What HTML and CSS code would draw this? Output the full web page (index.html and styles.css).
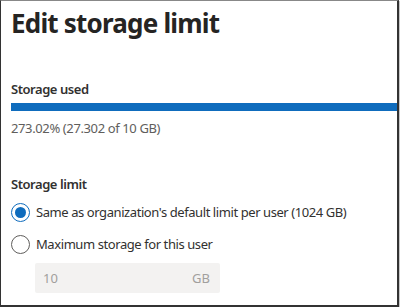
FILE: index.html
```html
<!DOCTYPE html>
<html lang="en">
<head>
	<meta charset="UTF-8">
	<title>Edit storage limit</title>
	<link rel="stylesheet" href="styles.css">
</head>
<body>
	<div class="panel">
		<h1 class="title">Edit storage limit</h1>
		<div class="section">
			<div class="label">Storage used</div>
			<div class="bar"><div class="bar_fill" style="width: 100%"></div></div>
			<div class="usage">273.02% (27.302 of 10 GB)</div>
		</div>
		<div class="section">
			<div class="label">Storage limit</div>
			<ul class="options">
				<li class="option"><span class="radio checked"></span> Same as organization's default limit per user (1024 GB)</li>
				<li class="option"><span class="radio"></span> Maximum storage for this user</li>
			</ul>
			<div class="field">
				<span class="field_value">10</span>
				<span class="field_unit">GB</span>
			</div>
		</div>
	</div>
</body>
</html>
```

FILE: styles.css
```css
html{
	font-family: "Noto Sans", "Open Sans", sans-serif;
	color: #323130;
}
body{
	margin: 0;
	padding: 0;
}
.panel {
	box-sizing: border-box;
	width: 399px;
	height: 307px;
	border: 1px solid #333;
	border-top-color: #888;
	border-right-width: 2px;
	border-bottom-width: 2px;
	box-shadow: 1px 1px 0 #c8c8c8;
	padding: 0 0 0 10px;
	overflow: hidden;
}
.title {
	margin: 0;
	padding-top: 4px;
	font-size: 26px;
	letter-spacing: -0.8px;
	line-height: 36px;
	font-weight: 700;
	color: #252423;
}
.section {
	margin-top: 39px;
}
.section + .section {
	margin-top: 38px;
}
.label {
	font-size: 13px;
	letter-spacing: -0.45px;
	font-weight: 600;
	line-height: 18px;
}
.bar {
	margin-top: 5px;
	height: 8px;
}
.bar_fill {
	height: 100%;
	background: #0f6cbd;
}
.usage {
	margin-top: 8px;
	font-size: 13px;
	letter-spacing: -0.38px;
	line-height: 18px;
	color: #605e5c;
}
.options {
	list-style: none;
	margin: 3px 0 0;
	padding: 0;
}
.option {
	display: flex;
	align-items: center;
	gap: 6px;
	height: 32px;
	font-size: 13px;
	letter-spacing: -0.42px;
}
.radio {
	box-sizing: border-box;
	width: 19px;
	height: 19px;
	border: 1px solid #605e5c;
	border-radius: 50%;
	display: flex;
	justify-content: center;
	align-items: center;
}
.radio.checked {
	border-color: #0f6cbd;
}
.radio.checked::after {
	content: "";
	width: 11px;
	height: 11px;
	border-radius: 50%;
	background: #0f6cbd;
}
.field {
	margin: 3px 0 0 24px;
	width: 185px;
	height: 30px;
	box-sizing: border-box;
	background: #f3f2f1;
	border-radius: 2px;
	padding: 0 10px 0 8px;
	display: flex;
	justify-content: space-between;
	align-items: center;
	font-size: 13px;
	color: #a19f9d;
}
```
